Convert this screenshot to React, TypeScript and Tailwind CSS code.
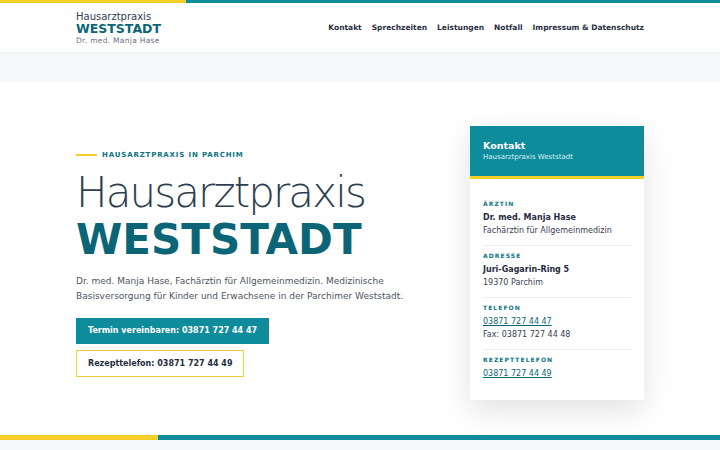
import React from "react";

const font = { fontFamily: '"DejaVu Sans", Verdana, sans-serif' };

function Label({ children }: { children: React.ReactNode }) {
  return (
    <div className="text-[6px] font-bold tracking-[0.18em] text-[#0b7282] leading-[8px]">
      {children}
    </div>
  );
}

export default function App() {
  return (
    <div className="w-[720px] h-[450px] overflow-hidden bg-white flex flex-col" style={font}>
      <div className="flex h-[3px] shrink-0">
        <div className="w-[186px] bg-[#f5cf27]" />
        <div className="flex-1 bg-[#0f8c9c]" />
      </div>
      <header className="h-[49px] shrink-0 flex items-center">
        <div className="w-[568px] mx-auto flex items-center justify-between">
          <div className="flex flex-col mt-[1px]">
            <span className="text-[10px] leading-[11px] text-[#2c3e50]">Hausarztpraxis</span>
            <span className="text-[12.5px] leading-[13px] font-bold text-[#0b6577]">WESTSTADT</span>
            <span className="text-[7.5px] leading-[11px] tracking-[0.04em] text-[#6b7280]">Dr. med. Manja Hase</span>
          </div>
          <nav className="flex gap-[10px] text-[7.5px] font-bold text-[#1f2d3d]">
            <span>Kontakt</span>
            <span>Sprechzeiten</span>
            <span>Leistungen</span>
            <span>Notfall</span>
            <span>Impressum &amp; Datenschutz</span>
          </nav>
        </div>
      </header>
      <div className="h-[30px] shrink-0 bg-[#f5f9fa] border-t border-[#eef2f4]" />
      <main className="flex-1 flex">
        <div className="w-[568px] mx-auto flex justify-between items-start pt-[44px]">
          <div className="flex flex-col pt-[23px]">
            <div className="flex items-center gap-[5px] h-[12px]">
              <div className="w-[21px] h-[2px] bg-[#f5cf27]" />
              <span className="text-[7px] leading-[12px] font-bold tracking-[0.12em] text-[#0b7282]">HAUSARZTPRAXIS IN PARCHIM</span>
            </div>
            <h1 className="mt-[10px] text-[42px] leading-[44px] font-extralight text-[#2c3e50] tracking-[-0.045em]">
              Hausarztpraxis
            </h1>
            <div className="mt-[3px] text-[42px] leading-[43px] font-bold text-[#0b6577]">WESTSTADT</div>
            <p className="mt-[13px] text-[9px] leading-[15px] text-[#4b5563]">
              Dr. med. Manja Hase, Fachärztin für Allgemeinmedizin. Medizinische
              <br />
              Basisversorgung für Kinder und Erwachsene in der Parchimer Weststadt.
            </p>
            <div className="mt-[14px] flex flex-col items-start gap-[6px]">
              <div className="h-[26px] px-[12px] flex items-center bg-[#0f8c9c] text-white text-[8px] font-bold">
                Termin vereinbaren: 03871 727 44 47
              </div>
              <div className="h-[27px] px-[11px] flex items-center border border-[#f0cf3a] text-[#1f2d3d] text-[8px] font-bold">
                Rezepttelefon: 03871 727 44 49
              </div>
            </div>
          </div>
          <aside className="w-[174px] h-[274px] bg-white shadow-[0_10px_30px_rgba(0,0,0,0.12)] flex flex-col">
            <div className="h-[53px] bg-[#0f8c9c] px-[13px] flex flex-col justify-center border-b-[3px] border-[#f5cf27]">
              <div className="text-[9.5px] leading-[13px] font-bold text-white">Kontakt</div>
              <div className="text-[7px] leading-[11px] text-[#d7f0f3]">Hausarztpraxis Weststadt</div>
            </div>
            <div className="px-[13px] pt-[21px] flex flex-col">
              <div className="pb-[8px] border-b border-[#eceff1]">
                <Label>ÄRZTIN</Label>
                <div className="mt-[3px] text-[8px] leading-[13px] font-bold text-[#1f2d3d]">Dr. med. Manja Hase</div>
                <div className="text-[8px] leading-[13px] text-[#374151]">Fachärztin für Allgemeinmedizin</div>
              </div>
              <div className="pt-[6px] pb-[8px] border-b border-[#eceff1]">
                <Label>ADRESSE</Label>
                <div className="mt-[3px] text-[8px] leading-[13px] font-bold text-[#1f2d3d]">Juri-Gagarin-Ring 5</div>
                <div className="text-[8px] leading-[13px] text-[#374151]">19370 Parchim</div>
              </div>
              <div className="pt-[6px] pb-[8px] border-b border-[#eceff1]">
                <Label>TELEFON</Label>
                <div className="mt-[3px] text-[8px] leading-[13px] text-[#0b6577] underline">03871 727 44 47</div>
                <div className="text-[8px] leading-[13px] text-[#374151]">Fax: 03871 727 44 48</div>
              </div>
              <div className="pt-[6px]">
                <Label>REZEPTTELEFON</Label>
                <div className="mt-[3px] text-[8px] leading-[13px] text-[#0b6577] underline">03871 727 44 49</div>
              </div>
            </div>
          </aside>
        </div>
      </main>
      <div className="flex h-[5px] shrink-0">
        <div className="w-[158px] bg-[#f5cf27]" />
        <div className="flex-1 bg-[#0f8c9c]" />
      </div>
      <div className="h-[10px] shrink-0 bg-[#f5f9fa]" />
    </div>
  );
}
